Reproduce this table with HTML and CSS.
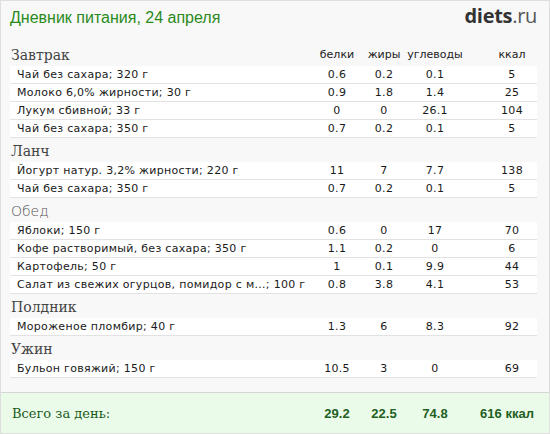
FILE: index.html
```html
<!DOCTYPE html>
<html lang="ru">
<head>
<meta charset="utf-8">
<link rel="stylesheet" href="styles.css">
</head>
<body>
<div class="frame">
  <header class="top">
    <h1 class="title">Дневник питания, 24 апреля</h1>
    <div class="logo"><b>diets</b>.ru</div>
  </header>
  <main class="content">
    <div class="meal-head">
      <span class="meal-name">Завтрак</span>
      <span class="col">белки</span><span class="col">жиры</span><span class="col">углеводы</span><span class="col kcal">ккал</span>
    </div>
    <div class="row"><span class="name">Чай без сахара; 320 г</span><span class="num">0.6</span><span class="num">0.2</span><span class="num">0.1</span><span class="num kcal">5</span></div>
    <div class="row"><span class="name">Молоко 6,0% жирности; 30 г</span><span class="num">0.9</span><span class="num">1.8</span><span class="num">1.4</span><span class="num kcal">25</span></div>
    <div class="row"><span class="name">Лукум сбивной; 33 г</span><span class="num">0</span><span class="num">0</span><span class="num">26.1</span><span class="num kcal">104</span></div>
    <div class="row"><span class="name">Чай без сахара; 350 г</span><span class="num">0.7</span><span class="num">0.2</span><span class="num">0.1</span><span class="num kcal">5</span></div>

    <div class="meal-head"><span class="meal-name">Ланч</span></div>
    <div class="row"><span class="name">Йогурт натур. 3,2% жирности; 220 г</span><span class="num">11</span><span class="num">7</span><span class="num">7.7</span><span class="num kcal">138</span></div>
    <div class="row"><span class="name">Чай без сахара; 350 г</span><span class="num">0.7</span><span class="num">0.2</span><span class="num">0.1</span><span class="num kcal">5</span></div>

    <div class="meal-head"><span class="meal-name sans">Обед</span></div>
    <div class="row"><span class="name">Яблоки; 150 г</span><span class="num">0.6</span><span class="num">0</span><span class="num">17</span><span class="num kcal">70</span></div>
    <div class="row"><span class="name">Кофе растворимый, без сахара; 350 г</span><span class="num">1.1</span><span class="num">0.2</span><span class="num">0</span><span class="num kcal">6</span></div>
    <div class="row"><span class="name">Картофель; 50 г</span><span class="num">1</span><span class="num">0.1</span><span class="num">9.9</span><span class="num kcal">44</span></div>
    <div class="row"><span class="name">Салат из свежих огурцов, помидор с м...; 100 г</span><span class="num">0.8</span><span class="num">3.8</span><span class="num">4.1</span><span class="num kcal">53</span></div>

    <div class="meal-head"><span class="meal-name">Полдник</span></div>
    <div class="row"><span class="name">Мороженое пломбир; 40 г</span><span class="num">1.3</span><span class="num">6</span><span class="num">8.3</span><span class="num kcal">92</span></div>

    <div class="meal-head"><span class="meal-name">Ужин</span></div>
    <div class="row"><span class="name">Бульон говяжий; 150 г</span><span class="num">10.5</span><span class="num">3</span><span class="num">0</span><span class="num kcal">69</span></div>
  </main>
  <footer class="total">
    <span class="total-label">Всего за день:</span>
    <span class="tnum">29.2</span><span class="tnum">22.5</span><span class="tnum">74.8</span><span class="tnum kcal">616 ккал</span>
  </footer>
</div>
</body>
</html>
```

FILE: styles.css
```css
* { box-sizing: border-box; }
html, body { margin: 0; padding: 0; }
body { width: 550px; height: 434px; overflow: hidden; background: #fff; }
.frame {
  width: 550px; height: 434px;
  background: #f8f8f8;
  border: 1px solid #dedede;
  display: flex; flex-direction: column;
}
.top {
  display: flex; justify-content: space-between; align-items: center;
  padding: 3px 12px 0 9px; height: 30px;
}
.title {
  margin: 0; font: normal 16px "Liberation Sans", Arial, sans-serif;
  color: #2b8a1c;
}
.logo {
  font: 20px "Open Sans", "DejaVu Sans", sans-serif; color: #555; letter-spacing: -0.3px;
  margin-top: -4px;
}
.logo b { color: #333; font-weight: 700; }
.content { padding: 11px 12px 0 9px; flex: 1; }
.meal-head, .row, .total {
  display: grid; grid-template-columns: minmax(0, 1fr) 48px 46px 56px 74px;
}
.meal-head { align-items: end; height: 24px; padding-bottom: 3px; }
.meal-name { font: 14px "DejaVu Serif", Georgia, serif; color: #444; padding-left: 1px; }
.meal-name.sans { font-family: "DejaVu Sans", sans-serif; font-weight: 300; color: #555; }
.col { font: 11px "DejaVu Sans", Verdana, sans-serif; color: #222; text-align: center; padding-bottom: 2px; }
.kcal { padding-left: 24px; }
.row {
  height: 18px; align-items: center;
  background: #fff; border-bottom: 1px solid #e2e2e2;
  font: 11px "DejaVu Sans", Verdana, sans-serif; color: #1a1a1a;
}
.name { padding-left: 7px; white-space: nowrap; overflow: hidden; letter-spacing: 0.3px; }
.num { text-align: center; letter-spacing: 0.3px; }
.total {
  height: 41px; background: #eafbea; border-top: 1px solid #d6d6d6;
  align-items: center; padding: 0 12px 0 9px;
}
.total-label { font: 13px "DejaVu Serif", Georgia, serif; color: #1a5c1a; padding-left: 2px; }
.tnum { font: bold 13px "Liberation Sans", Arial, sans-serif; color: #1f5f1f; text-align: center; }
.tnum.kcal { padding-left: 14px; }
```
